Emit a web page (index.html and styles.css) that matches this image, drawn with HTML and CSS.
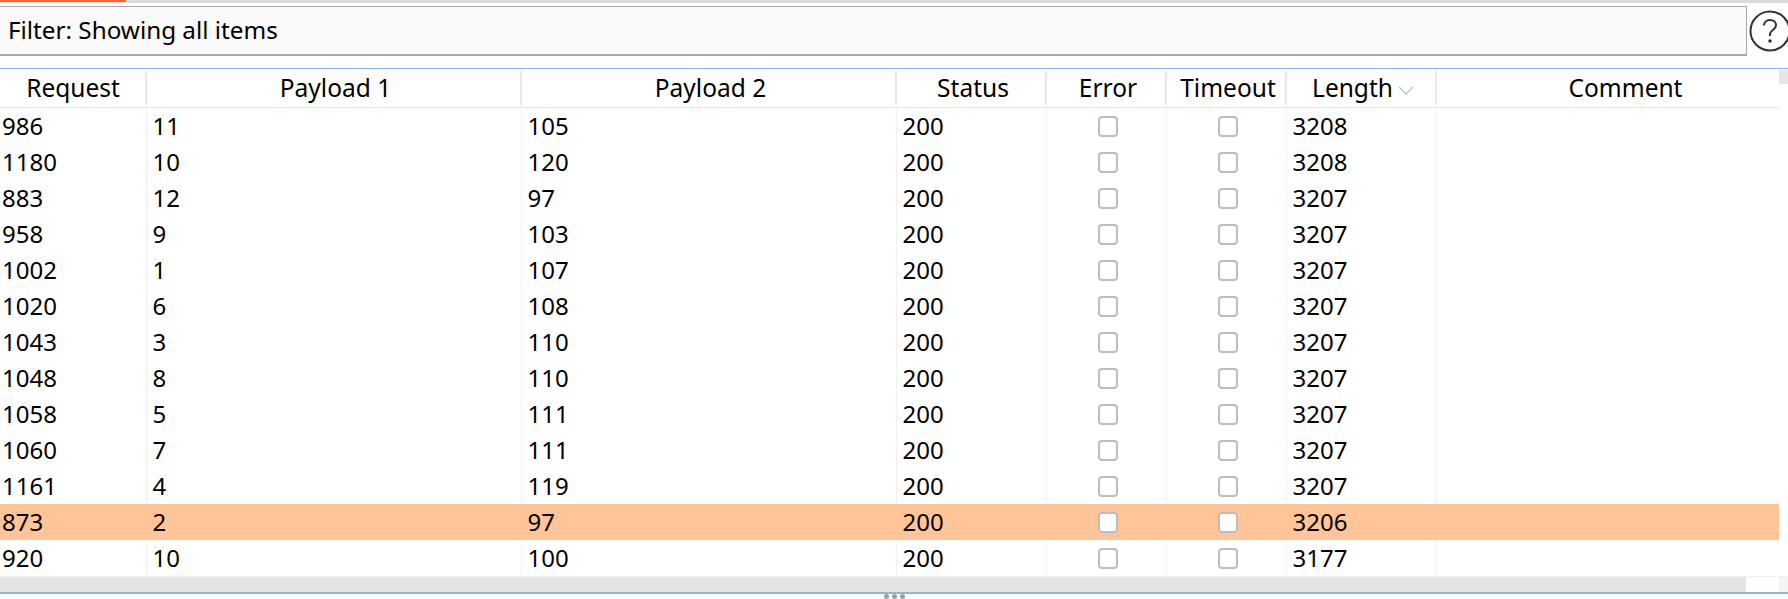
FILE: index.html
```html
<!DOCTYPE html>
<html lang="en">
<head>
<meta charset="utf-8">
<title>Intruder results</title>
<link rel="stylesheet" href="styles.css">
</head>
<body>
<div class="tabline"><div class="tabline-active"></div></div>
<div class="filter-row">
  <div class="filter">Filter: Showing all items</div>
  <svg class="help" viewBox="0 0 42 42" aria-label="help"><circle cx="21" cy="21" r="19.5" fill="none" stroke="#333" stroke-width="2"/><path d="M15 15.5c0-3.5 2.6-5.5 6-5.5s6 2 6 5c0 2.6-1.6 3.8-3.2 5-1.6 1.2-2.8 2.2-2.8 4.5v1.5" fill="none" stroke="#333" stroke-width="2"/><circle cx="21" cy="31" r="1.8" fill="#333"/></svg>
</div>
<div class="panel">
  <div class="table-wrap">
    <div class="table-inner">
      <table>
        <colgroup><col class="c1"><col class="c2"><col class="c3"><col class="c4"><col class="c5"><col class="c6"><col class="c7"><col></colgroup>
        <thead><tr><th>Request</th><th>Payload 1</th><th>Payload 2</th><th>Status</th><th>Error</th><th>Timeout</th><th>Length<svg class="sort" viewBox="0 0 14 8"><path d="M1 1l6 6 6-6" fill="none" stroke="#bbb" stroke-width="1.2"/></svg></th><th class="th-comment">Comment</th></tr></thead>
        <tbody>
          <tr><td>986</td><td>11</td><td>105</td><td>200</td><td class="ck"><span class="box"></span></td><td class="ck"><span class="box"></span></td><td>3208</td><td></td></tr>
          <tr><td>1180</td><td>10</td><td>120</td><td>200</td><td class="ck"><span class="box"></span></td><td class="ck"><span class="box"></span></td><td>3208</td><td></td></tr>
          <tr><td>883</td><td>12</td><td>97</td><td>200</td><td class="ck"><span class="box"></span></td><td class="ck"><span class="box"></span></td><td>3207</td><td></td></tr>
          <tr><td>958</td><td>9</td><td>103</td><td>200</td><td class="ck"><span class="box"></span></td><td class="ck"><span class="box"></span></td><td>3207</td><td></td></tr>
          <tr><td>1002</td><td>1</td><td>107</td><td>200</td><td class="ck"><span class="box"></span></td><td class="ck"><span class="box"></span></td><td>3207</td><td></td></tr>
          <tr><td>1020</td><td>6</td><td>108</td><td>200</td><td class="ck"><span class="box"></span></td><td class="ck"><span class="box"></span></td><td>3207</td><td></td></tr>
          <tr><td>1043</td><td>3</td><td>110</td><td>200</td><td class="ck"><span class="box"></span></td><td class="ck"><span class="box"></span></td><td>3207</td><td></td></tr>
          <tr><td>1048</td><td>8</td><td>110</td><td>200</td><td class="ck"><span class="box"></span></td><td class="ck"><span class="box"></span></td><td>3207</td><td></td></tr>
          <tr><td>1058</td><td>5</td><td>111</td><td>200</td><td class="ck"><span class="box"></span></td><td class="ck"><span class="box"></span></td><td>3207</td><td></td></tr>
          <tr><td>1060</td><td>7</td><td>111</td><td>200</td><td class="ck"><span class="box"></span></td><td class="ck"><span class="box"></span></td><td>3207</td><td></td></tr>
          <tr><td>1161</td><td>4</td><td>119</td><td>200</td><td class="ck"><span class="box"></span></td><td class="ck"><span class="box"></span></td><td>3207</td><td></td></tr>
          <tr class="hl"><td>873</td><td>2</td><td>97</td><td>200</td><td class="ck"><span class="box"></span></td><td class="ck"><span class="box"></span></td><td>3206</td><td></td></tr>
          <tr><td>920</td><td>10</td><td>100</td><td>200</td><td class="ck"><span class="box"></span></td><td class="ck"><span class="box"></span></td><td>3177</td><td></td></tr>
        </tbody>
      </table>
      <div class="vscroll"><div class="vthumb"></div></div>
    </div>
    <div class="hscroll"><div class="hthumb"></div><div class="corner"></div></div>
  </div>
</div>
<div class="grip"><span></span><span></span><span></span></div>
</body>
</html>
```
FILE: styles.css
```css
* { box-sizing: border-box; }
html, body { margin: 0; height: 599px; overflow: hidden; background: #fff; }
body { font-family: "Noto Sans", "Open Sans", sans-serif; font-size: 24px; color: #000; display: flex; flex-direction: column; }
body > * { flex: none; }
.tabline { height: 3px; background: #d8dcdc; }
.tabline-active { width: 126px; height: 2px; background: #ff6633; }
.filter-row { display: flex; align-items: center; height: 51px; margin-top: 2px; }
.filter { flex: none; width: 1747px; height: 50px; background: #fafafa; border: 1px solid #a8a8a8; border-left: 0; border-bottom-width: 2px; padding-left: 8px; line-height: 46px; font-size: 24.25px; }
.help { flex: none; width: 42px; height: 42px; margin-left: 2px; }
.panel { margin-top: 12px; border-top: 1px solid #8fb6da; height: 524px; }
.table-wrap { display: flex; flex-direction: column; height: 523px; }
.table-inner { display: flex; flex: none; padding-top: 1px; }
table { border-collapse: collapse; table-layout: fixed; width: 1779px; flex: none; }
.c1 { width: 146px; } .c2 { width: 375px; } .c3 { width: 375px; } .c4 { width: 150px; }
.c5 { width: 120px; } .c6 { width: 120px; } .c7 { width: 150px; }
th { font-weight: 400; font-size: 24.5px; height: 37px; padding: 0 0 2px; text-align: center; border-bottom: 1px solid #e6e6e6; position: relative; }
th + th { padding-left: 4px; }
th + th::before { content: ""; position: absolute; left: -1px; top: 1px; bottom: 2px; width: 2px; background: #e8e8e8; }
th.th-comment { padding-left: 36px; }
td { height: 36px; padding: 0 0 0 6px; border-left: 1px solid #f2f2f2; line-height: 36px; white-space: nowrap; }
td:first-child { border-left: 0; padding-left: 2px; }
td.ck { padding: 0 0 0 4px; text-align: center; vertical-align: top; }
.box { display: inline-block; width: 20px; height: 21px; margin-top: 8px; border: 2px solid #bdbdbd; border-radius: 4px; background: #fff; vertical-align: top; }
.hl td { background: #ffc599; border-left-color: #ffc599; }
.sort { width: 16px; height: 9px; margin-left: 5px; vertical-align: 2px; }
.vscroll { flex: 1; }
.vthumb { height: 14px; background: #e6e6e6; }
.hscroll { display: flex; justify-content: space-between; height: 17px; border-top: 1px solid #f0f0f0; }
.hthumb { width: 1746px; background: #e4e4e4; }
.corner { width: 9px; background: #f4f4f4; }
.grip { display: flex; justify-content: center; gap: 3px; border-top: 2px solid #8fb6da; }
.grip span { width: 5px; height: 5px; border-radius: 50%; background: #a0a0a0; }
```
